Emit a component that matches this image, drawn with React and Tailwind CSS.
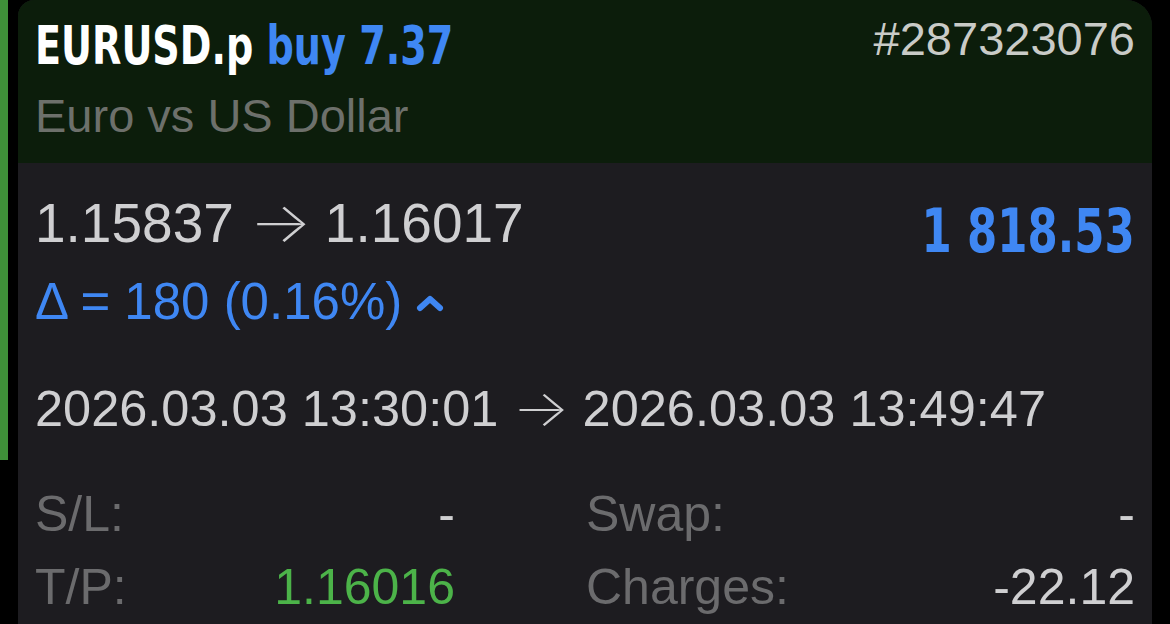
import React from 'react';

const sans = { fontFamily: '"Liberation Sans", Arial, Helvetica, sans-serif' };
const cond = { fontFamily: '"DejaVu Sans Condensed", "Liberation Sans Narrow", sans-serif' };

const ChevronUp = () => (
    <svg width="28" height="20" viewBox="0 0 28 20" className="ml-[14px] mt-[17px]">
        <path d="M4 15 L14 6 L24 15" fill="none" stroke="#3f87f3" strokeWidth="6" strokeLinecap="round" strokeLinejoin="round" />
    </svg>
);

// стрелка тоньше и длиннее, чем в Liberation
const Arrow = () => (
    <span className="inline-block font-extralight origin-left scale-x-[1.2] mr-[8px]" style={{ fontFamily: 'Inter, "DejaVu Sans", sans-serif' }}>→</span>
);

const App = () => {
    const trade = {
        symbol: 'EURUSD.p',
        side: 'buy',
        volume: '7.37',
        ticket: '#287323076',
        name: 'Euro vs US Dollar',
        open: '1.15837',
        close: '1.16017',
        profit: '1 818.53',
        delta: 'Δ = 180 (0.16%)',
        openTime: '2026.03.03 13:30:01',
        closeTime: '2026.03.03 13:49:47',
    };

    return (
        <div className="w-[1170px] h-[624px] bg-black flex overflow-hidden" style={sans}>
            {/* polosa sleva */}
            <div className="w-[8px] h-[460px] bg-[#3f9139] shrink-0" />
            <div className="flex-1 ml-[10px] mr-[18px] flex flex-col rounded-tl-[16px] rounded-tr-[26px] overflow-hidden bg-[#1d1c20]">
                {/* header */}
                <div className="h-[163px] bg-[#0c1d0b] px-[17px] pt-[15px] flex justify-between items-start shrink-0">
                    <div>
                        <div className="mt-[4px] h-[55px] text-[54px] leading-none font-bold whitespace-nowrap origin-left scale-x-[0.785]" style={cond}>
                            <span className="text-white">{trade.symbol}</span>{' '}
                            <span className="text-[#3f87f3]">{trade.side} {trade.volume}</span>
                        </div>
                        <div className="mt-[18px] text-[47px] leading-none text-[#6d706b]">{trade.name}</div>
                    </div>
                    <div className="text-[47px] leading-none text-[#c9cbc7]">{trade.ticket}</div>
                </div>

                {/* body */}
                <div className="px-[17px] pt-[32px]">
                    <div className="h-[55px] flex justify-between items-start">
                        <div className="text-[55px] leading-none text-[#cfcfd1] whitespace-nowrap">{trade.open} <Arrow /> {trade.close}</div>
                        <div className="mt-[6px] text-[60px] leading-none font-bold text-[#3f87f3] whitespace-nowrap origin-right scale-x-[0.805]" style={cond}>{trade.profit}</div>
                    </div>
                    <div className="mt-[26px] flex items-start text-[51px] leading-none text-[#3f87f3]">
                        <span>{trade.delta}</span>
                        <ChevronUp />
                    </div>
                    <div className="mt-[56px] text-[50.5px] leading-none text-[#cfcfd1] whitespace-nowrap">{trade.openTime} <Arrow /> {trade.closeTime}</div>

                    <div className="mt-[54px] grid grid-cols-[420px_1fr] gap-x-[131px] gap-y-[23px] text-[50px] leading-none">
                        <div className="flex justify-between">
                            <span className="text-[#6b6b6d]">S/L:</span>
                            <span className="text-[#cfcfd1]">-</span>
                        </div>
                        <div className="flex justify-between">
                            <span className="text-[#6b6b6d]">Swap:</span>
                            <span className="text-[#cfcfd1]">-</span>
                        </div>
                        <div className="flex justify-between">
                            <span className="text-[#6b6b6d]">T/P:</span>
                            <span className="text-[#4cb349]">1.16016</span>
                        </div>
                        <div className="flex justify-between">
                            <span className="text-[#6b6b6d]">Charges:</span>
                            <span className="text-[#cfcfd1]">-22.12</span>
                        </div>
                    </div>
                </div>
            </div>
        </div>
    );
};

export default App;
